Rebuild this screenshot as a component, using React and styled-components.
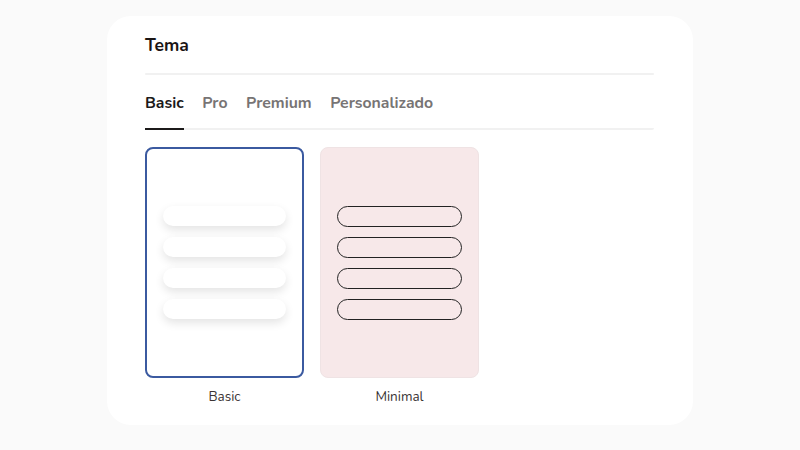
import React, { useState } from "react";
import styled, { createGlobalStyle } from "styled-components";

const GlobalStyle = createGlobalStyle`
  body {
    margin: 0;
    background: #fafafa;
    font-family: "Nunito", "Lato", "Noto Sans", sans-serif;
  }
`;

const tabs = ["Basic", "Pro", "Premium", "Personalizado"];

const themes = [
  { name: "Basic", variant: "basic" },
  { name: "Minimal", variant: "minimal" },
];

function App() {
  const [activeTab, setActiveTab] = useState("Basic");
  const [selected, setSelected] = useState("Basic");

  return (
    <>
      <GlobalStyle />
      <Panel>
        <Title>Tema</Title>
        <Divider />
        <TabList>
          {tabs.map((tab) => (
            <Tab
              key={tab}
              $active={tab === activeTab}
              onClick={() => setActiveTab(tab)}
            >
              {tab}
            </Tab>
          ))}
        </TabList>
        <ThemeGrid>
          {themes.map((theme) => (
            <ThemeOption key={theme.name} onClick={() => setSelected(theme.name)}>
              <Preview $variant={theme.variant} $selected={selected === theme.name}>
                <PillStack $variant={theme.variant}>
                  {[0, 1, 2, 3].map((i) => (
                    <Pill key={i} $variant={theme.variant} />
                  ))}
                </PillStack>
              </Preview>
              <ThemeName>{theme.name}</ThemeName>
            </ThemeOption>
          ))}
        </ThemeGrid>
      </Panel>
    </>
  );
}

export default App;

const Panel = styled.div`
  box-sizing: border-box;
  width: 586px;
  height: 409px;
  margin: 16px auto 0;
  padding: 17px 39px 0 38px;
  background: #ffffff;
  border-radius: 24px;
`;

const Title = styled.h2`
  margin: 0 0 16px;
  font-size: 17.5px;
  line-height: 24px;
  font-weight: 700;
  color: #1a1414;
`;

const Divider = styled.div`
  height: 2px;
  border-radius: 2px;
  background: #f1f1f1;
`;

const TabList = styled.div`
  display: flex;
  gap: 18.5px;
  border-bottom: 2px solid #f1f1f1;
  border-radius: 0 0 2px 2px;
`;

const Tab = styled.div`
  padding: 18px 0 15px;
  margin-bottom: -2px;
  font-size: 15.8px;
  line-height: 20px;
  font-weight: 700;
  color: ${(p) => (p.$active ? "#1c1a1a" : "#777474")};
  border-bottom: 2px solid ${(p) => (p.$active ? "#1c1a1a" : "transparent")};
  cursor: pointer;
`;

const ThemeGrid = styled.div`
  display: flex;
  gap: 16px;
  margin-top: 17px;
`;

const ThemeOption = styled.div`
  display: flex;
  flex-direction: column;
  align-items: center;
  cursor: pointer;
`;

const Preview = styled.div`
  box-sizing: border-box;
  width: 159px;
  height: 231px;
  display: flex;
  align-items: center;
  justify-content: center;
  border-radius: 8px;
  background: ${(p) => (p.$variant === "minimal" ? "#f7e8e9" : "#ffffff")};
  border: ${(p) =>
    p.$selected ? "2px solid #3b5aa0" : "1px solid #efe3e4"};
`;

const PillStack = styled.div`
  display: flex;
  flex-direction: column;
  gap: ${(p) => (p.$variant === "minimal" ? "10px" : "11px")};
`;

const Pill = styled.div`
  box-sizing: border-box;
  width: ${(p) => (p.$variant === "minimal" ? "125px" : "123px")};
  height: ${(p) => (p.$variant === "minimal" ? "21px" : "20px")};
  border-radius: 999px;
  background: ${(p) => (p.$variant === "minimal" ? "transparent" : "#ffffff")};
  border: ${(p) => (p.$variant === "minimal" ? "1px solid #222222" : "none")};
  box-shadow: ${(p) =>
    p.$variant === "minimal" ? "none" : "0 4px 10px rgba(0, 0, 0, 0.11)"};
`;

const ThemeName = styled.div`
  margin-top: 10px;
  font-size: 13.5px;
  line-height: 18px;
  color: #3a3434;
`;
